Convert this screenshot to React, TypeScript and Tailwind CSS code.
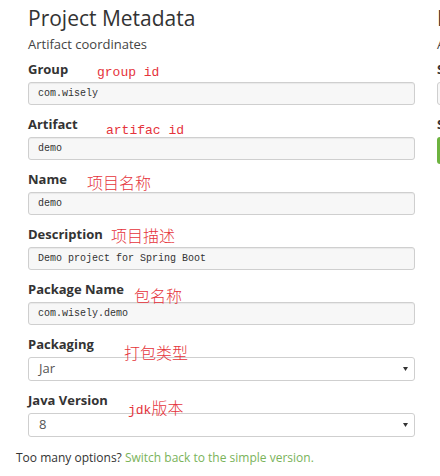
import React from "react";

const sans = { fontFamily: '"Open Sans", "Noto Sans", sans-serif' };

function Label({ children }: { children: React.ReactNode }) {
  return (
    <div className="h-[18px] leading-[18px] text-[13px] font-bold text-[#333] whitespace-nowrap">{children}</div>
  );
}

function TextInput({ value }: { value: string }) {
  return (
    <div className="mt-[4px] h-[23px] w-full rounded-[3px] border border-[#cfcfcf] bg-[#f7f7f7] pl-[9px] flex items-center text-[10px] text-[#333] font-['Liberation_Mono',monospace] shadow-[inset_0_1px_1px_rgba(0,0,0,0.06)]">
      {value}
    </div>
  );
}

function SelectInput({ value }: { value: string }) {
  return (
    <div className="mt-[4px] h-[24px] w-full rounded-[3px] border border-[#cfcfcf] bg-white pl-[10px] pr-[6px] flex items-center justify-between text-[13px] text-[#555]">
      <span>{value}</span>
      <svg width="5" height="4" viewBox="0 0 5 4">
        <path d="M0 0 L5 0 L2.5 4 Z" fill="#333" />
      </svg>
    </div>
  );
}

function Field({ label, children }: { label: string; children: React.ReactNode }) {
  return (
    <div className="mb-[10px]">
      <Label>{label}</Label>
      {children}
    </div>
  );
}

function Note({ children, className }: { children: React.ReactNode; className: string }) {
  return <div className={`absolute text-[#e5333b] whitespace-nowrap ${className}`}>{children}</div>;
}

const mono = "font-['Liberation_Mono',monospace] text-[13px] leading-[14px]";
const cjk = "font-['Noto_Sans_CJK_SC',sans-serif] font-light text-[16px] leading-[16px]";

export default function App() {
  return (
    <div className="relative w-[440px] h-[476px] overflow-hidden bg-white pl-[16px]" style={sans}>
      <div className="flex gap-[22px] w-[700px]">
        <div className="ml-[11px] w-[388px] shrink-0 pt-[4px]">
          <div className="text-[21px] leading-[28px] text-[#333] pl-[1px]">Project Metadata</div>
          <div className="mt-[3px] text-[13px] leading-[18px] text-[#444] pl-[1px]">Artifact coordinates</div>
          <div className="mt-[7px] pl-[1px]">
            <Field label="Group">
              <TextInput value="com.wisely" />
            </Field>
            <Field label="Artifact">
              <TextInput value="demo" />
            </Field>
            <Field label="Name">
              <TextInput value="demo" />
            </Field>
            <Field label="Description">
              <TextInput value="Demo project for Spring Boot" />
            </Field>
            <Field label="Package Name">
              <TextInput value="com.wisely.demo" />
            </Field>
            <Field label="Packaging">
              <SelectInput value="Jar" />
            </Field>
            <Field label="Java Version">
              <SelectInput value="8" />
            </Field>
          </div>
        </div>
        <div className="w-[240px] shrink-0 pt-[4px]">
          <div className="text-[21px] leading-[28px] text-[#333] whitespace-nowrap">Dependencies</div>
          <div className="mt-[3px] text-[13px] leading-[18px] text-[#444] whitespace-nowrap">Add Spring Boot Starters</div>
          <div className="mt-[7px]">
            <Label>Search for dependencies</Label>
            <div className="mt-[4px] h-[23px] w-full rounded-[3px] border border-[#cfcfcf] bg-[#f7f7f7]" />
            <div className="mt-[10px]">
              <Label>Selected Dependencies</Label>
            </div>
            <div className="mt-[4px] h-[27px] w-[120px] rounded-[3px] bg-[#6db33f]" />
          </div>
        </div>
      </div>
      <div className="absolute left-[16px] top-[449px] text-[12px] leading-[18px] text-[#333] whitespace-nowrap">
        Too many options? <span className="text-[#7ab35a]">Switch back to the simple version.</span>
      </div>

      <Note className={`left-[97px] top-[66px] ${mono}`}>group id</Note>
      <Note className={`left-[106px] top-[124px] ${mono}`}>artifac id</Note>
      <Note className={`left-[87px] top-[174px] ${cjk}`}>项目名称</Note>
      <Note className={`left-[111px] top-[227px] ${cjk}`}>项目描述</Note>
      <Note className={`left-[134px] top-[287px] ${cjk}`}>包名称</Note>
      <Note className={`left-[124px] top-[344px] ${cjk}`}>打包类型</Note>
      <Note className={`left-[128px] top-[399px] ${cjk}`}>
        <span className={mono}>jdk</span>版本
      </Note>
    </div>
  );
}
